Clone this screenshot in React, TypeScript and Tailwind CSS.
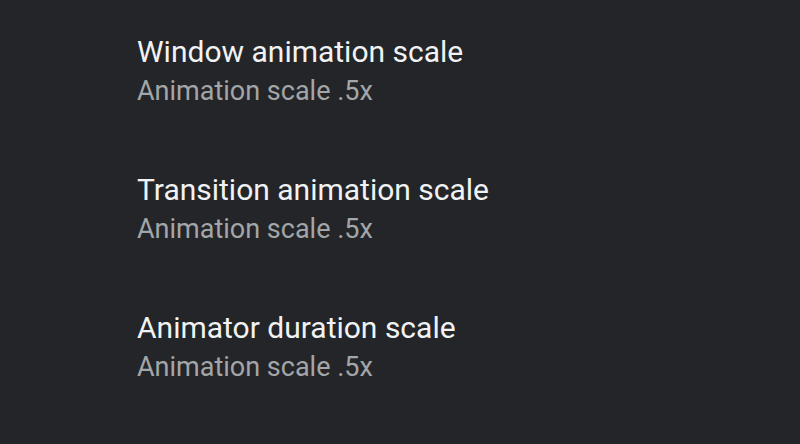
const items = [
  { title: 'Window animation scale', summary: 'Animation scale .5x' },
  { title: 'Transition animation scale', summary: 'Animation scale .5x' },
  { title: 'Animator duration scale', summary: 'Animation scale .5x' },
];

export default function App() {
  return (
    <div className="h-[444px] w-[800px] overflow-hidden bg-[#232528] pt-[33px] pl-[137px] font-['Roboto',sans-serif]">
      {items.map((item) => (
        <div key={item.title} className="flex h-[138px] flex-col gap-[3px]">
          <div className="text-[30px] leading-[38px] text-[#f1f2f3]">{item.title}</div>
          <div className="text-[27px] leading-[34px] text-[#a3a6a9]">{item.summary}</div>
        </div>
      ))}
    </div>
  );
}
